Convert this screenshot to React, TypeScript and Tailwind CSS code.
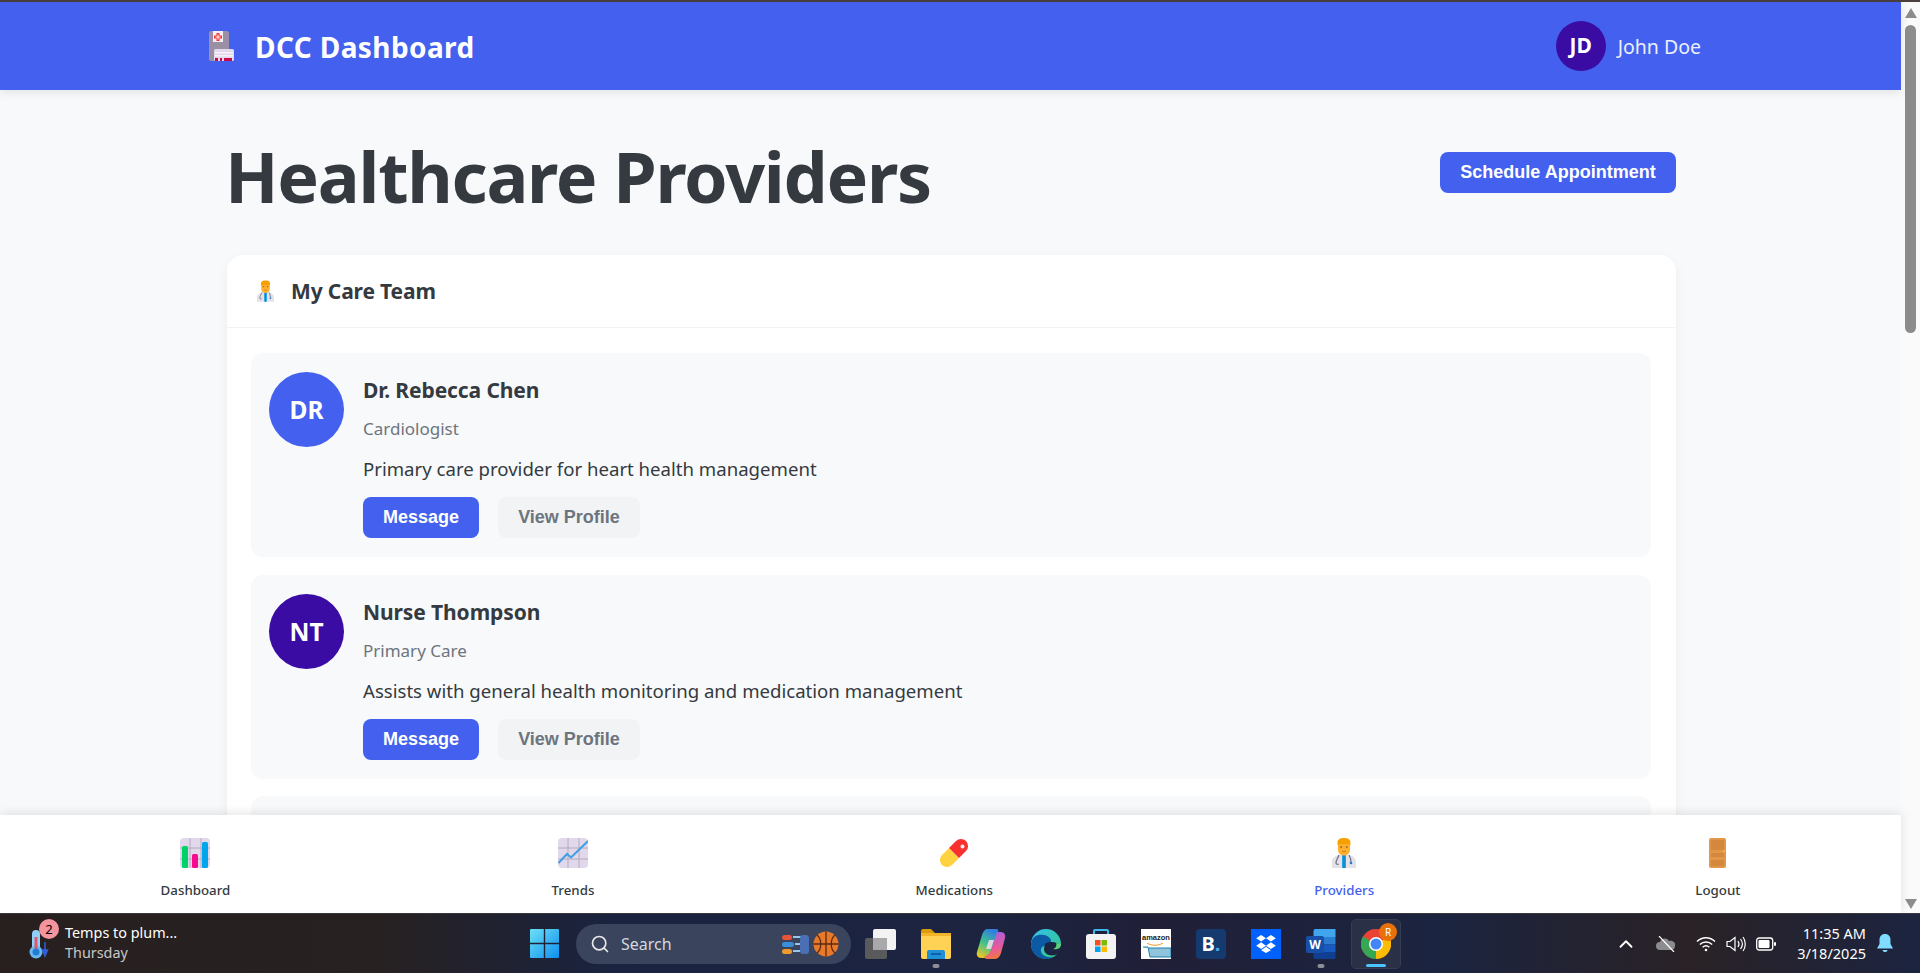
import React from "react";
import { ChevronUp, Search } from "lucide-react";

const providers = [
  {
    initials: "DR",
    name: "Dr. Rebecca Chen",
    role: "Cardiologist",
    note: "Primary care provider for heart health management",
    color: "bg-[#4361ee]",
  },
  {
    initials: "NT",
    name: "Nurse Thompson",
    role: "Primary Care",
    note: "Assists with general health monitoring and medication management",
    color: "bg-[#3a0ca3]",
  },
];

// ---------------- EMOJI STYLE ICONS ----------------

const HospitalIcon = () => (
  <svg viewBox="0 0 25 30" className="w-[25px] h-[30px]">
    <rect x="0" y="0" width="20" height="30" rx="2" fill="#9a8fa3" />
    <rect x="4" y="0" width="10" height="11" fill="#f4eef6" />
    <path d="M7.5 2h3v2.5H13v3h-2.5V10h-3V7.500H5v-3h2.500z" fill="#f8312f" />
    <path d="M8.500 3.500h1v2h2v1h-2v2h-1v-2h-2v-1h2z" fill="#fff" />
    <rect x="5" y="18" width="20" height="12" rx="1.500" fill="#e1d8ec" />
    <rect x="6" y="21" width="18" height="1.500" fill="#f6f1fa" />
    <rect x="6" y="24" width="18" height="1.500" fill="#f6f1fa" />
    <rect x="6" y="27" width="3" height="3" fill="#ca0b4a" />
    <rect x="11" y="27" width="2" height="3" fill="#ca0b4a" />
    <rect x="15" y="27" width="8" height="3" fill="#ca0b4a" />
  </svg>
);

const BarsIcon = () => (
  <svg viewBox="0 0 30 30" className="w-[30px] h-[30px]">
    <rect width="30" height="30" rx="4" fill="#e1d8ec" />
    <path d="M0 10h30M0 21h30M10 0v30M21 0v30" stroke="#b4acbc" strokeWidth="1" />
    <rect x="2" y="8" width="6" height="22" rx="1.500" fill="#00d26a" />
    <rect x="12" y="16" width="6" height="14" rx="1.500" fill="#f70a8d" />
    <rect x="22" y="4" width="6" height="26" rx="1.500" fill="#00a6ed" />
  </svg>
);

const TrendIcon = () => (
  <svg viewBox="0 0 30 30" className="w-[30px] h-[30px]">
    <rect width="30" height="30" rx="4" fill="#e1d8ec" />
    <path d="M0 10h30M0 21h30M10 0v30M21 0v30" stroke="#b4acbc" strokeWidth="1" />
    <path d="M0.500 25L9 16l4 3.500L30 3" fill="none" stroke="#3f9fe8" strokeWidth="2" />
  </svg>
);

const PillIcon = () => (
  <svg viewBox="0 0 30 30" className="w-[30px] h-[30px]">
    <path d="M10 10L3 17a6.900 6.900 0 0 0 10 10l7-7z" fill="#ffd23f" />
    <path d="M10 10l7-7a6.900 6.900 0 0 1 10 10l-7 7z" fill="#f8312f" />
    <circle cx="23.500" cy="8.500" r="2" fill="#f4eef0" />
  </svg>
);

const DoctorIcon = ({ className }: { className: string }) => (
  <svg viewBox="0 0 24 30" className={className}>
    <path d="M0 30v-6c0-4 3-6 7-7h10c4 1 7 3 7 7v6z" fill="#e4e2e6" />
    <path d="M10 17h4v13h-4z" fill="#26a4e6" />
    <rect x="11.300" y="17" width="1.400" height="13" fill="#0f7fc2" />
    <path d="M6 2.500C7 .500 9.500 0 12 0s5 .5 6 2.500c.7 1.500.5 3.500.3 5H5.700c-.2-1.500-.5-3.500.3-5z" fill="#f59f00" />
    <path d="M6 6c2 .5 10 .5 12 0v6c0 3.500-3 5.500-6 5.500S6 15.500 6 12z" fill="#ffb02e" />
    <rect x="8.200" y="8.500" width="2" height="1" fill="#6b4a20" />
    <rect x="13.800" y="8.500" width="2" height="1" fill="#6b4a20" />
    <rect x="10.300" y="13" width="3.400" height="1" fill="#c9781a" />
    <path d="M7 17c-1 3-3 5-3 8 0 1.500 2 1.500 2.500 1M17 17c1 2 2 4 2 7" fill="none" stroke="#6f6b8f" strokeWidth="1.200" />
    <circle cx="19" cy="25" r="1.300" fill="#1c7ed6" />
  </svg>
);

const DoorIcon = () => (
  <svg viewBox="0 0 17 30" className="w-[17px] h-[30px]">
    <rect width="17" height="30" rx="2" fill="#e19747" />
    <rect x="2" y="2" width="13" height="10" fill="#d3883e" />
    <rect x="2" y="15" width="13" height="4" fill="#d3883e" />
    <rect x="2" y="22" width="13" height="6" fill="#d3883e" />
    <rect x="14" y="12" width="2" height="2" fill="#ffb02e" />
  </svg>
);

// ---------------- TASKBAR ICONS ----------------

const WeatherIcon = () => (
  <svg viewBox="0 0 24 30" className="w-[24px] h-[30px]">
    <rect x="5" y="1" width="8" height="22" rx="4" fill="#8fd0fb" />
    <circle cx="9" cy="23" r="6.500" fill="#6cb8f0" />
    <rect x="7.500" y="8" width="3" height="14" fill="#e2566a" />
    <circle cx="9" cy="23" r="3.500" fill="#1f7fd4" />
    <path d="M18 13v10M15.500 21l2.500 6 2.500-6z" stroke="#2f5fdc" strokeWidth="1.500" fill="#2f5fdc" />
  </svg>
);

const WindowsIcon = () => (
  <svg viewBox="0 0 29 29" className="w-[29px] h-[29px]">
    <defs>
      <linearGradient id="win" x1="0" y1="0" x2="1" y2="1">
        <stop offset="0" stopColor="#6ce0f5" />
        <stop offset="1" stopColor="#0f8ff0" />
      </linearGradient>
    </defs>
    <path d="M0 1a1 1 0 0 1 1-1h12.800v13.800H0zM15.200 0H28a1 1 0 0 1 1 1v12.800H15.200zM0 15.200h13.800V29H1a1 1 0 0 1-1-1zM15.200 15.200H29V28a1 1 0 0 1-1 1H15.200z" fill="url(#win)" />
  </svg>
);

const SearchArt = () => (
  <svg viewBox="0 0 64 28" className="w-[64px] h-[28px]">
    <rect x="2" y="5" width="10" height="5" rx="2.500" fill="#e6553a" />
    <rect x="2" y="12" width="12" height="5" rx="2.500" fill="#3a8fd8" />
    <rect x="2" y="19" width="10" height="5" rx="2.500" fill="#ef9a2d" />
    <path d="M13 7h14M15 14h12M13 21h14" stroke="#9cc6e8" strokeWidth="2" />
    <rect x="20" y="5" width="9" height="19" rx="3" fill="#4a6fb5" />
    <circle cx="46" cy="14" r="12.500" fill="#e8792b" />
    <path d="M46 1.500v25M33.500 14h25M37 5c5 4 5 14 0 18M55 5c-5 4-5 14 0 18" stroke="#5b2a10" strokeWidth="1.300" fill="none" />
  </svg>
);

const TaskViewIcon = () => (
  <svg viewBox="0 0 31 30" className="w-[31px] h-[30px]">
    <rect x="0" y="9" width="22" height="21" rx="2" fill="#5a5a5c" />
    <rect x="8" y="0" width="23" height="21" rx="2" fill="#f3f3f3" />
    <rect x="8" y="9" width="14" height="12" fill="#a9a9ab" />
  </svg>
);

const FilesIcon = () => (
  <svg viewBox="0 0 30 30" className="w-[30px] h-[30px]">
    <path d="M0 2a2 2 0 0 1 2-2h8l4 4h-14z" fill="#d99a0b" />
    <rect x="0" y="4" width="30" height="26" rx="2" fill="#ffd255" />
    <rect x="0" y="4" width="30" height="3" fill="#f0b528" />
    <path d="M6 30v-7a2 2 0 0 1 2-2h14a2 2 0 0 1 2 2v7z" fill="#1e90d8" />
    <rect x="10" y="24" width="10" height="2" fill="#0d5fa8" />
  </svg>
);

const CopilotIcon = () => (
  <svg viewBox="0 0 30 30" className="w-[30px] h-[30px]">
    <defs>
      <linearGradient id="cop1" x1="0.600" y1="0" x2="0.200" y2="1">
        <stop offset="0" stopColor="#2f7fe0" />
        <stop offset="0.500" stopColor="#42c28a" />
        <stop offset="1" stopColor="#f2c81f" />
      </linearGradient>
      <linearGradient id="cop2" x1="0.400" y1="0" x2="0.600" y2="1">
        <stop offset="0" stopColor="#a55fe0" />
        <stop offset="0.600" stopColor="#e85a9a" />
        <stop offset="1" stopColor="#f07a3a" />
      </linearGradient>
    </defs>
    <path d="M11 0h9c2 0 3 1.500 2 3.500L14 25c-1 2-3 4-5 4H5c-3 0-5-3-4-6l5-17c1-3 3-6 5-6z" fill="url(#cop1)" />
    <path d="M21 3h4c3 0 5 3 4 6l-4 15c-1 3-3 6-6 6h-8c-2 0-3-1.500-2-3 3-1 5-3 6-6z" fill="url(#cop2)" />
    <path d="M13 11h5l-3 9h-5z" fill="#f4dff0" opacity="0.850" />
  </svg>
);

const EdgeIcon = () => (
  <svg viewBox="0 0 30 30" className="w-[30px] h-[30px]">
    <defs>
      <linearGradient id="edge" x1="0" y1="0" x2="1" y2="1">
        <stop offset="0" stopColor="#35c1f1" />
        <stop offset="1" stopColor="#2fc87a" />
      </linearGradient>
    </defs>
    <circle cx="15" cy="15" r="15" fill="url(#edge)" />
    <path d="M0 15C1 6 8 5 13 6c6 1 9 6 6 9-3 2-8 1-9 5-1 5 4 9 11 8-2 1.500-4 2-6 2C6 30 0 23 0 15z" fill="#0c59a4" />
    <path d="M15 14c5-2 12-1 15 3 0 3-1 6-3 8-6 3-14 1-14-5 0-2 1-5 2-6z" fill="#1b2440" />
    <path d="M30 15c0 5-5 6-8 5 3-1 4-4 3-6z" fill="#5ad17a" />
  </svg>
);

const StoreIcon = () => (
  <svg viewBox="0 0 30 30" className="w-[30px] h-[30px]">
    <path d="M8 5V2a1 1 0 0 1 1-1h12a1 1 0 0 1 1 1v3" stroke="#3fb8ee" strokeWidth="2" fill="none" />
    <rect x="0" y="5" width="30" height="25" rx="3" fill="#f3f3f3" />
    <rect x="9" y="11" width="5.500" height="5.500" fill="#f25022" />
    <rect x="15.500" y="11" width="5.500" height="5.500" fill="#7fba00" />
    <rect x="9" y="17.500" width="5.500" height="5.500" fill="#00a4ef" />
    <rect x="15.500" y="17.500" width="5.500" height="5.500" fill="#ffb900" />
  </svg>
);

const AmazonIcon = () => (
  <div className="w-[30px] h-[30px] bg-white flex flex-col items-center overflow-hidden">
    <span className="text-[7.500px] leading-[11px] mt-[3px] font-bold text-[#222] font-['Liberation_Sans',sans-serif]">amazon</span>
    <svg viewBox="0 0 30 16" className="w-[30px] h-[16px]">
      <path d="M6 0c5 3 11 3 16 0" stroke="#f29a1f" strokeWidth="1" fill="none" />
      <path d="M2 4h5l2 10h21V5H8" fill="#8fc4dc" stroke="#1f7fa8" strokeWidth="1" />
    </svg>
  </div>
);

const BookingIcon = () => (
  <div className="w-[30px] h-[30px] rounded-[4px] bg-[#143a70] flex items-center justify-center text-white font-bold text-[20px] leading-none">
    B<span className="text-[#3fa9e8]">.</span>
  </div>
);

const DropboxIcon = () => (
  <div className="w-[30px] h-[30px] bg-[#0061fe] flex items-center justify-center">
    <svg viewBox="0 0 24 22" className="w-[20px] h-[18px]">
      <path d="M6 0l6 4-6 4-6-4zM18 0l6 4-6 4-6-4zM6 9l6 4-6 4-6-4zM18 9l6 4-6 4-6-4zM6 18.500l6-4 6 4-6 3.500z" fill="#fff" />
    </svg>
  </div>
);

const WordIcon = () => (
  <div className="relative w-[30px] h-[30px]">
    <svg viewBox="0 0 29 30" className="w-[30px] h-[30px]">
      <path d="M7 2a2 2 0 0 1 2-2h20v8H7z" fill="#41a5ee" />
      <rect x="7" y="8" width="22" height="7.500" fill="#2b7cd3" />
      <rect x="7" y="15.500" width="22" height="7.500" fill="#185abd" />
      <path d="M7 23h22v7H9a2 2 0 0 1-2-2z" fill="#103f91" />
    </svg>
    <span className="absolute left-0 top-[7px] w-[18px] h-[17px] rounded-[2px] bg-[#1a4fa8] text-white text-[12px] leading-[17px] font-bold text-center">W</span>
  </div>
);

const ChromeIcon = () => (
  <div className="relative w-[50px] h-[50px] rounded-[5px] bg-[#2a3146] border border-[#363d52] flex items-center justify-center">
    <svg viewBox="0 0 30 30" className="w-[30px] h-[30px]">
      <circle cx="15" cy="15" r="15" fill="#ea4335" />
      <path d="M15 15L2 22.500A15 15 0 0 1 2 7.500z" fill="#34a853" />
      <path d="M15 15L2 22.500A15 15 0 0 0 15 30l13-15z" fill="#34a853" />
      <path d="M15 15l13-7.500A15 15 0 0 1 15 30z" fill="#fbbc04" />
      <circle cx="15" cy="15" r="7" fill="#fff" />
      <circle cx="15" cy="15" r="5.500" fill="#4285f4" />
    </svg>
    <span className="absolute right-[3px] top-[3px] w-[18px] h-[18px] rounded-full bg-[#e8710a] text-white text-[10px] leading-[18px] text-center">R</span>
    <span className="absolute left-[14px] bottom-[1px] w-[20px] h-[3px] rounded-full bg-[#4cc2ff]" />
  </div>
);

const TrayCloud = () => (
  <svg viewBox="0 0 20 16" className="w-[20px] h-[16px]">
    <path d="M4 14a4 4 0 0 1 0-8c1-4 7-5 9-1 4-1 7 2 6 5-.2 3-2 4-4 4z" fill="#8c8c90" />
    <path d="M3 0l15 16" stroke="#fff" strokeWidth="1.200" />
  </svg>
);

const TrayWifi = () => (
  <svg viewBox="0 0 20 16" className="w-[20px] h-[16px]" fill="none" stroke="#fff" strokeWidth="1.400">
    <path d="M1 5.500c5-5 13-5 18 0M3.800 8.500c3.500-3.300 9-3.300 12.400 0M6.600 11.300c2-1.800 4.800-1.800 6.800 0" />
    <circle cx="10" cy="14" r="1.300" fill="#fff" stroke="none" />
  </svg>
);

const TraySound = () => (
  <svg viewBox="0 0 20 16" className="w-[20px] h-[16px]" fill="none" stroke="#fff" strokeWidth="1.200">
    <path d="M1 5.500h3L9 1.500v13l-5-4H1z" />
    <path d="M12 5c1.300 2 1.300 4 0 6M14.500 3c2.300 3 2.300 7 0 10M17 1c3 4 3 10 0 14" />
  </svg>
);

const TrayBattery = () => (
  <svg viewBox="0 0 20 14" className="w-[20px] h-[14px]">
    <rect x="0.700" y="1" width="16" height="12" rx="2.500" fill="none" stroke="#fff" strokeWidth="1.300" />
    <rect x="2.500" y="3" width="11" height="8" rx="1" fill="#fff" />
    <rect x="18" y="5" width="2" height="4" rx="1" fill="#fff" />
  </svg>
);

const TrayBell = () => (
  <svg viewBox="0 0 16 19" className="w-[16px] h-[19px]">
    <path d="M8 0c3.500 0 5.500 2.500 5.500 6v4l2.500 4.500H0L2.500 10V6C2.500 2.500 4.500 0 8 0z" fill="#7fdcff" />
    <path d="M5.500 16h5c-.5 2.800-4.500 2.800-5 0z" fill="#7fdcff" />
  </svg>
);

// ---------------- PAGE PARTS ----------------

const ProviderCard = ({ provider }: { provider: (typeof providers)[number] }) => (
  <div className="h-[204px] shrink-0 rounded-[12px] bg-[#f8f9fa] pl-[18px] pt-[19px] flex gap-[19px]">
    <div className={`w-[75px] h-[75px] pt-[2px] rounded-full text-white flex items-center justify-center text-[24.500px] font-bold shrink-0 ${provider.color}`}>
      {provider.initials}
    </div>
    <div>
      <h3 className="text-[21px] leading-[36px] font-bold text-[#343a40] tracking-[-0.1px]">{provider.name}</h3>
      <p className="mt-[7px] text-[17px] leading-[28px] text-[#6c757d]">{provider.role}</p>
      <p className="mt-[12px] text-[18.600px] leading-[28px] text-[#343a40]">{provider.note}</p>
      <div className="mt-[14px] flex gap-[19px] font-['Liberation_Sans',sans-serif] font-bold text-[18px]">
        <button className="w-[116px] h-[41px] rounded-[8px] bg-[#4361ee] text-white">Message</button>
        <button className="w-[142px] h-[41px] rounded-[8px] bg-[#f1f3f5] text-[#6c757d]">View Profile</button>
      </div>
    </div>
  </div>
);

const NavItem = ({ icon, label, active }: { icon: React.ReactNode; label: string; active?: boolean }) => (
  <div className="flex flex-col items-center">
    <div className="h-[30px] flex items-center justify-center">{icon}</div>
    <span className={`mt-[12px] text-[13.300px] leading-[20px] font-medium ${active ? "text-[#4361ee]" : "text-[#343a40]"}`}>
      {label}
    </span>
  </div>
);

const Dot = () => <span className="absolute left-1/2 -translate-x-1/2 bottom-[-9px] w-[7px] h-[4px] rounded-full bg-[#8d8f98]" />;

const App = () => {
  return (
    <div className="w-[1920px] h-[973px] flex flex-col overflow-hidden bg-[#f8f9fa] font-['Noto_Sans',sans-serif]">
      <div className="h-[2px] shrink-0 bg-[#4a4040]" />

      <div className="flex flex-1 min-h-0">
        <div className="w-[1901px] flex flex-col">
          {/* HEADER */}
          <header className="relative z-10 h-[88px] shrink-0 bg-[#4361ee] text-white shadow-[0_2px_10px_rgba(0,0,0,0.1)] flex items-center justify-between pl-[209px] pr-[200px]">
            <div className="flex items-center gap-[21px]">
              <HospitalIcon />
              <span className="pt-[2px] text-[28px] font-bold leading-[36px] tracking-[0.4px]">DCC Dashboard</span>
            </div>
            <div className="flex items-center gap-[12px]">
              <div className="w-[50px] h-[50px] rounded-full bg-[#3a0ca3] flex items-center justify-center text-[21px] font-bold">JD</div>
              <span className="pt-[2px] text-[19.500px] text-white/90">John Doe</span>
            </div>
          </header>

          {/* MAIN */}
          <main className="flex-1 min-h-0 overflow-hidden pl-[227px] pr-[225px] pt-[39px]">
            <div className="flex items-center justify-between h-[86px] mb-[40px]">
              <h1 className="ml-[-2px] pt-[7px] text-[70px] leading-[86px] font-bold text-[#343a40] tracking-[-1.25px]">Healthcare Providers</h1>
              <button className="w-[236px] h-[41px] rounded-[8px] bg-[#4361ee] text-white font-['Liberation_Sans',sans-serif] font-bold text-[18px]">
                Schedule Appointment
              </button>
            </div>

            <section className="rounded-[16px] bg-white shadow-[0_4px_12px_rgba(0,0,0,0.05)]">
              <div className="h-[73px] border-b border-[#f1f3f5] pl-[30px] flex items-center gap-[17px]">
                <DoctorIcon className="w-[17px] h-[22px]" />
                <h2 className="pt-[2px] text-[21px] font-bold text-[#343a40] tracking-[-0.15px]">My Care Team</h2>
              </div>
              <div className="pl-[24px] pr-[25px] pt-[25px] flex flex-col gap-[17.500px]">
                {providers.map((p) => (
                  <ProviderCard key={p.initials} provider={p} />
                ))}
                <div className="h-[204px] shrink-0 rounded-[12px] bg-[#f8f9fa]" />
              </div>
            </section>
          </main>

          {/* BOTTOM NAV */}
          <nav className="relative z-10 h-[98px] shrink-0 bg-white shadow-[0_-2px_10px_rgba(0,0,0,0.1)] flex justify-around items-center pt-[10px]">
            <NavItem icon={<BarsIcon />} label="Dashboard" />
            <NavItem icon={<TrendIcon />} label="Trends" />
            <NavItem icon={<PillIcon />} label="Medications" />
            <NavItem icon={<DoctorIcon className="w-[24px] h-[30px]" />} label="Providers" active />
            <NavItem icon={<DoorIcon />} label="Logout" />
          </nav>
        </div>

        {/* SCROLLBAR */}
        <div className="w-[19px] shrink-0 bg-[#fafafa] flex flex-col items-center pt-[6px] pb-[4px]">
          <div className="w-0 h-0 border-x-[6.500px] border-x-transparent border-b-[10px] border-b-[#8c8c8c]" />
          <div className="w-[11px] h-[308px] mt-[7px] rounded-full bg-[#8c8c8c]" />
          <div className="flex-1" />
          <div className="w-0 h-0 border-x-[6.500px] border-x-transparent border-t-[10px] border-t-[#8c8c8c]" />
        </div>
      </div>

      {/* TASKBAR */}
      <footer className="h-[60px] shrink-0 border-t border-[#3a3a3e] text-white flex items-center bg-[linear-gradient(90deg,#28201f_0%,#272122_20%,#1a2340_32%,#1c2440_52%,#211f38_60%,#1b2440_75%,#2a2226_88%,#1c2440_100%)]">
        <div className="w-[530px] shrink-0 flex items-center pl-[27px] relative">
          <WeatherIcon />
          <span className="absolute left-[39px] top-[-5px] w-[20px] h-[20px] rounded-full bg-[#f4949c] text-black text-[13px] leading-[20px] text-center">2</span>
          <div className="ml-[14px] text-[14.400px] leading-[20px] -translate-y-[1px]">
            <div>Temps to plum...</div>
            <div className="text-white/75">Thursday</div>
          </div>
        </div>

        <div className="flex items-center">
          <WindowsIcon />
          <div className="ml-[17px] w-[275px] h-[40px] rounded-full bg-[#3a445c] flex items-center pl-[14px] pr-[7px]">
            <Search className="w-[20px] h-[20px] text-[#e8e8e8]" strokeWidth={2} />
            <span className="ml-[11px] text-[16px] text-[#d5d8df]">Search</span>
            <div className="flex-1" />
            <SearchArt />
          </div>
          <div className="ml-[14px] flex items-center gap-[25px]">
            <TaskViewIcon />
            <div className="relative"><FilesIcon /><Dot /></div>
            <CopilotIcon />
            <EdgeIcon />
            <StoreIcon />
            <AmazonIcon />
            <BookingIcon />
            <DropboxIcon />
            <div className="relative"><WordIcon /><Dot /></div>
          </div>
          <div className="ml-[15px]"><ChromeIcon /></div>
        </div>

        <div className="flex-1" />

        <div className="flex items-center pr-[27px]">
          <ChevronUp className="w-[22px] h-[22px]" strokeWidth={2} />
          <div className="ml-[19px]"><TrayCloud /></div>
          <div className="ml-[20px] flex items-center gap-[10px]">
            <TrayWifi />
            <TraySound />
            <TrayBattery />
          </div>
          <div className="ml-[21px] text-right text-[14.500px] leading-[20px] -translate-y-[1px]">
            <div>11:35 AM</div>
            <div>3/18/2025</div>
          </div>
          <div className="ml-[11px]"><TrayBell /></div>
        </div>
      </footer>
    </div>
  );
};

export default App;
